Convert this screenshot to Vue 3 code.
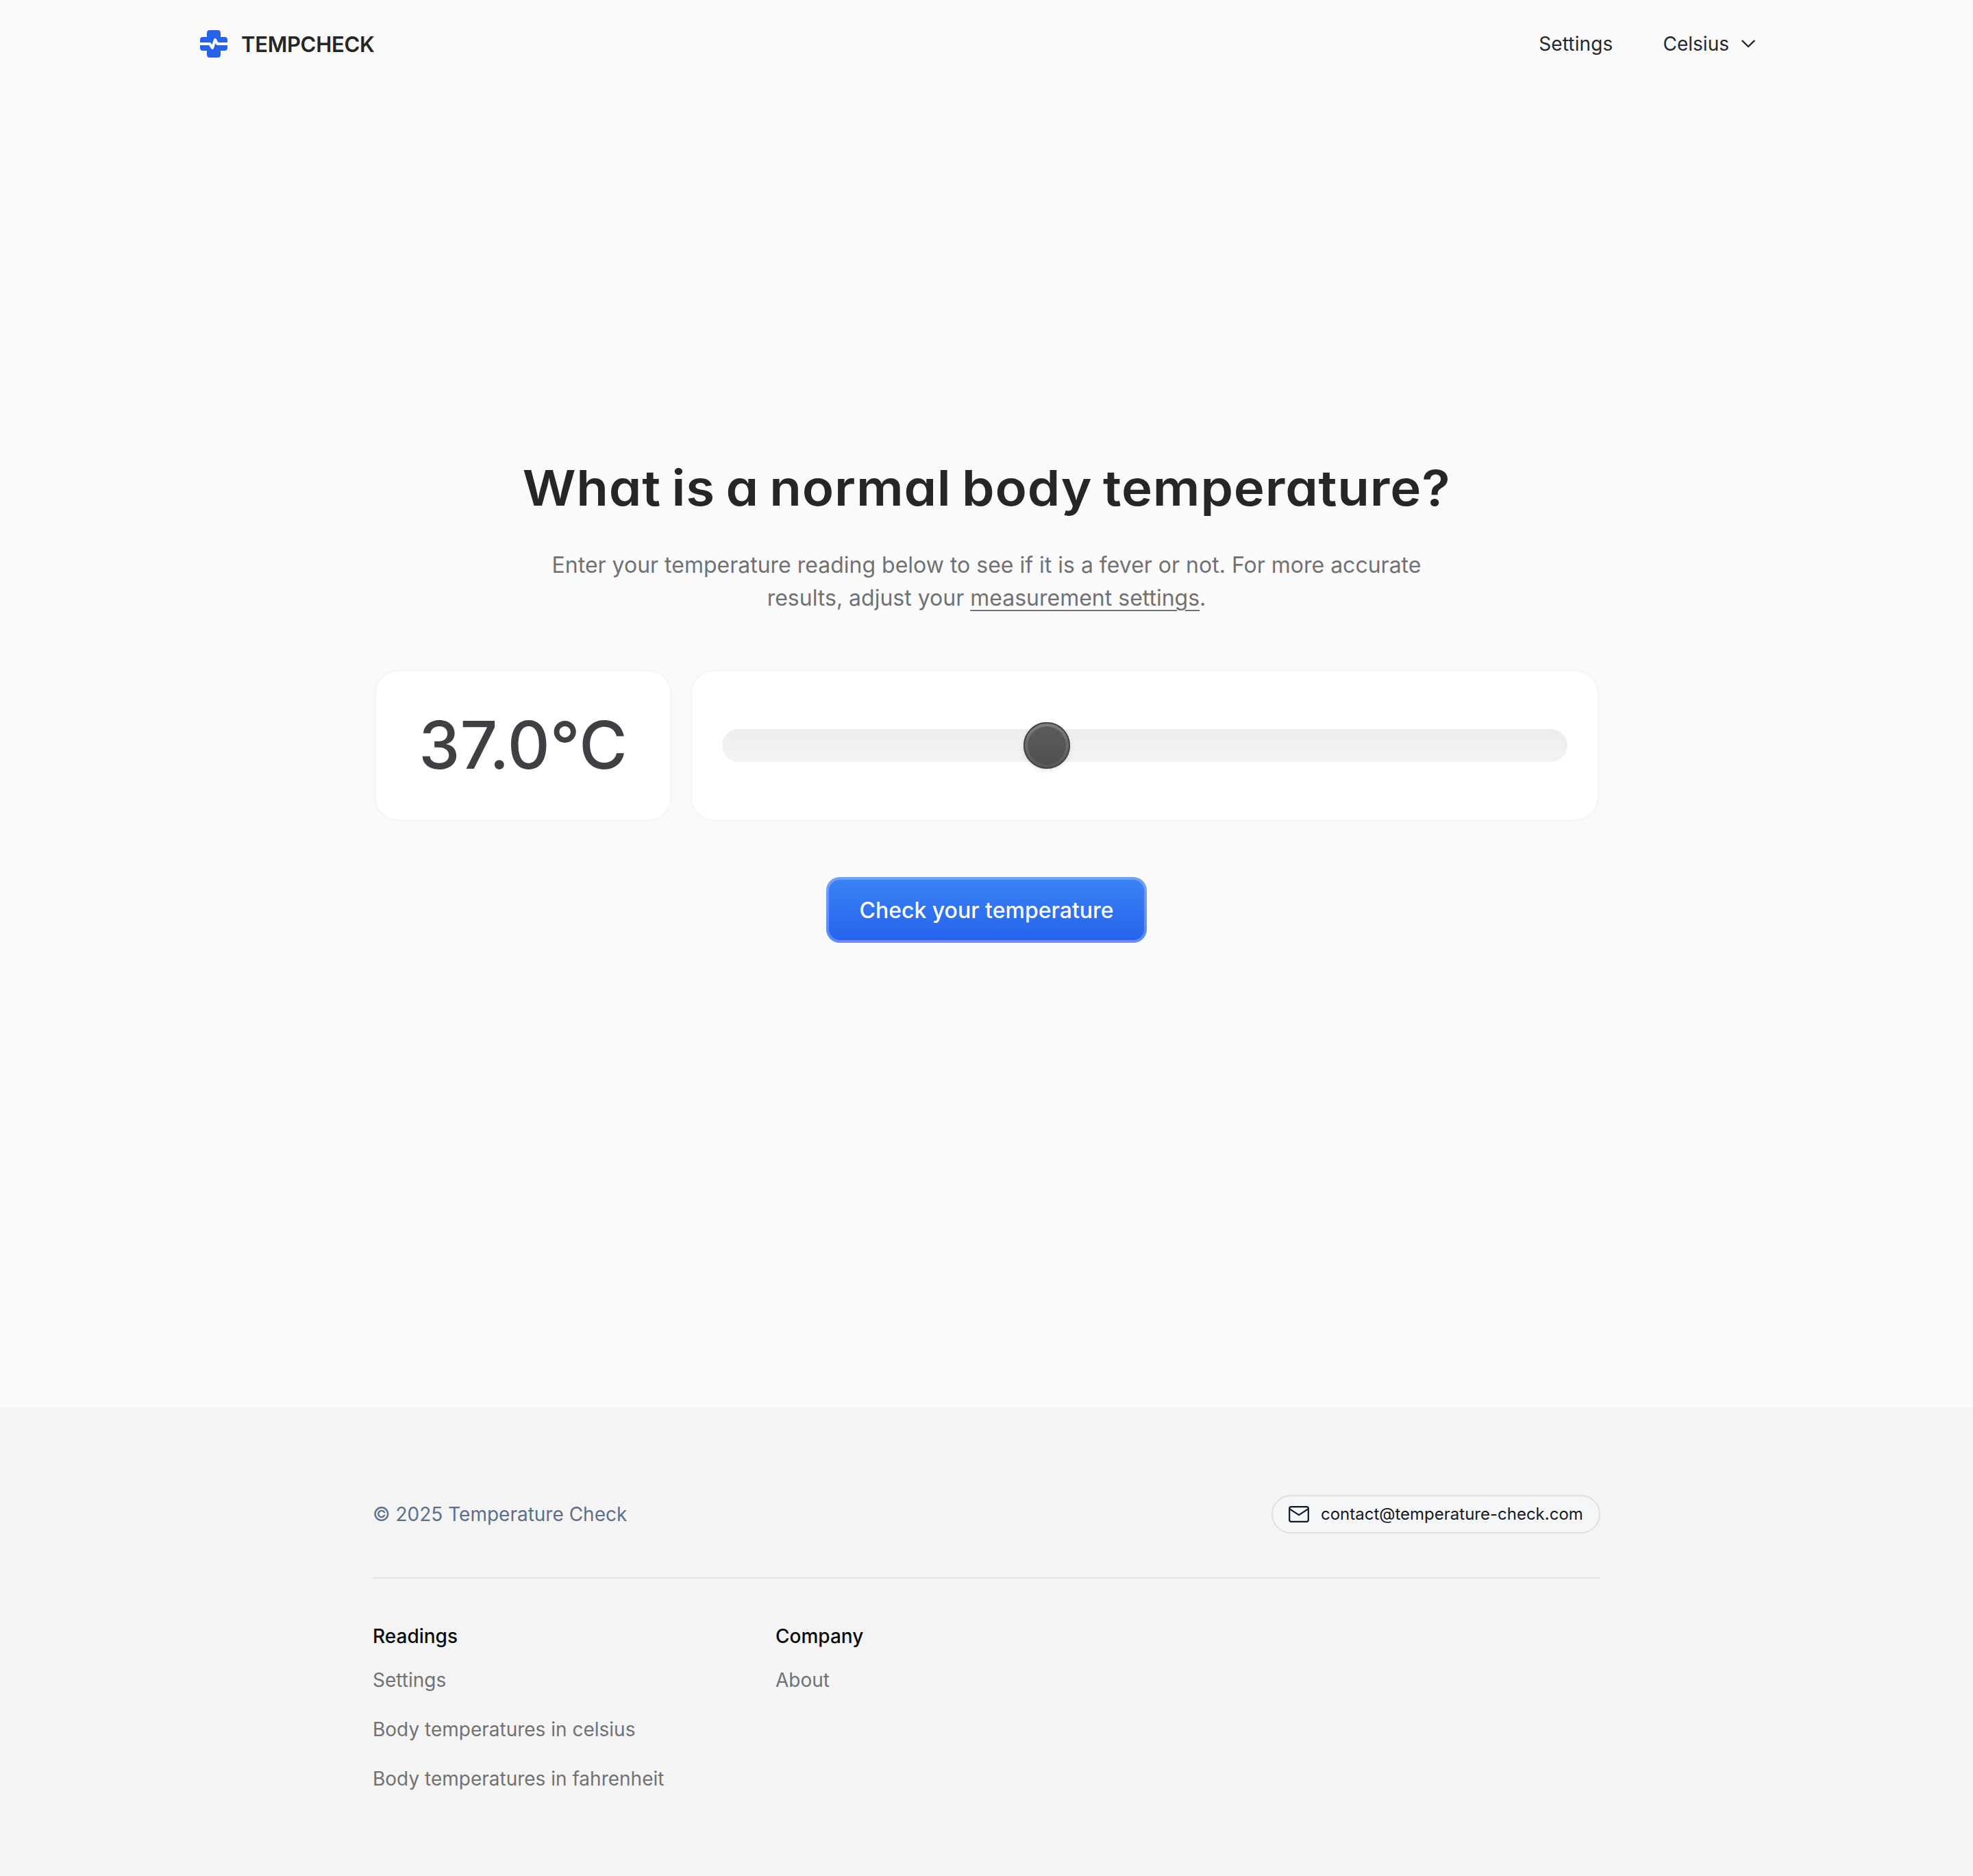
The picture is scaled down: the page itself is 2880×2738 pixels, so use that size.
<script setup>
import { ref, computed } from 'vue'

const temperature = ref(37)
const reading = computed(() => `${temperature.value.toFixed(1)}°C`)

const readings = ['Settings', 'Body temperatures in celsius', 'Body temperatures in fahrenheit']
const company = ['About']
</script>

<template>
  <div class="page">
    <header class="header">
      <a class="brand">
        <svg class="logo" viewBox="0 0 40 40">
          <path
            fill="#2563eb"
            d="M14 0h12a4 4 0 0 1 4 4v6h6a4 4 0 0 1 4 4v12a4 4 0 0 1-4 4h-6v6a4 4 0 0 1-4 4H14a4 4 0 0 1-4-4v-6H4a4 4 0 0 1-4-4V14a4 4 0 0 1 4-4h6V4a4 4 0 0 1 4-4z"
          />
          <path
            fill="none"
            stroke="#fafafa"
            stroke-width="4"
            stroke-linejoin="round"
            d="M-1 20H14.2L18 26L22 14L25.4 20H41"
          />
        </svg>
        <span class="brand-name">TEMPCHECK</span>
      </a>
      <nav class="nav">
        <a class="nav-settings">Settings</a>
        <a class="nav-unit">
          <span>Celsius</span>
          <svg class="chevron" viewBox="0 0 20 12">
            <path
              fill="none"
              stroke="currentColor"
              stroke-width="2.4"
              stroke-linecap="round"
              stroke-linejoin="round"
              d="M1.4 1.7L10 10L18.6 1.7"
            />
          </svg>
        </a>
      </nav>
    </header>

    <main class="main">
      <h1 class="title">What is a normal body temperature?</h1>
      <p class="intro">
        Enter your temperature reading below to see if it is a fever or not. For more accurate<br />
        results, adjust your <a class="link">measurement settings</a>.
      </p>
      <div class="cards">
        <div class="card reading"><span>{{ reading }}</span></div>
        <div class="card slider">
          <div class="track"><div class="thumb"></div></div>
        </div>
      </div>
      <button class="submit">Check your temperature</button>
    </main>

    <footer class="footer">
      <div class="footer-inner">
        <div class="footer-top">
          <span class="copyright">© 2025 Temperature Check</span>
          <a class="contact">
            <svg class="mail" viewBox="0 0 30 24">
              <rect x="1.2" y="1.2" width="27.6" height="21.6" rx="2.6" />
              <path d="M2 4.6L15 13.2L28 4.6" />
            </svg>
            <span>contact@temperature-check.com</span>
          </a>
        </div>
        <div class="columns">
          <section class="column">
            <h2>Readings</h2>
            <ul>
              <li v-for="item in readings" :key="item">{{ item }}</li>
            </ul>
          </section>
          <section class="column">
            <h2>Company</h2>
            <ul>
              <li v-for="item in company" :key="item">{{ item }}</li>
            </ul>
          </section>
        </div>
      </div>
    </footer>
  </div>
</template>

<style>
body {
  margin: 0;
  background: #fafafa;
}
</style>

<style scoped>
.page {
  display: flex;
  flex-direction: column;
  height: 2738px;
  font-family: Inter, sans-serif;
  font-size: 28px;
  line-height: 40px;
  color: #27272a;
  background: #fafafa;
}
.header {
  box-sizing: border-box;
  display: flex;
  align-items: center;
  justify-content: space-between;
  height: 128px;
  padding: 0 318px 0 292px;
}
.brand {
  display: flex;
  align-items: center;
  gap: 20px;
}
.logo {
  width: 40px;
  height: 40px;
}
.brand-name {
  padding-top: 1px;
  font-size: 31px;
  font-weight: 600;
  letter-spacing: -0.3px;
  color: #262626;
}
.nav {
  display: flex;
  align-items: center;
  gap: 73px;
}
.nav-settings {
  letter-spacing: 0.15px;
}
.nav-unit {
  display: flex;
  align-items: center;
  gap: 18px;
}
.chevron {
  width: 20px;
  height: 12px;
}
.main {
  box-sizing: border-box;
  display: flex;
  flex-direction: column;
  align-items: center;
  height: 1926px;
  padding-top: 544px;
}
.title {
  margin: 0;
  font-size: 72px;
  font-weight: 600;
  letter-spacing: 0.75px;
  word-spacing: -4.3px;
  line-height: 80px;
  white-space: nowrap;
  color: #262626;
  font-feature-settings: 'cv11', 'ss03';
  transform: scaleX(1.06);
}
.intro {
  margin: 49px 0 79px;
  font-size: 32px;
  line-height: 48px;
  text-align: center;
  white-space: nowrap;
  color: #717174;
}
.link {
  text-decoration: underline;
  text-decoration-thickness: 2px;
  text-underline-offset: 6px;
}
.cards {
  box-sizing: border-box;
  display: flex;
  gap: 32px;
  width: 1792px;
  height: 224px;
  padding: 4px 4px 4px 5px;
}
.card {
  display: flex;
  align-items: center;
  justify-content: center;
  border-radius: 32px;
  background: #fff;
  box-shadow: 0 0 0 3px rgba(0, 0, 0, 0.012), 0 0 6px rgba(0, 0, 0, 0.02);
}
.reading {
  width: 429px;
  font-size: 96px;
  font-weight: 500;
  color: #3f3f44;
}
.reading span {
  padding: 0 0 2px;
}
.slider {
  flex: 1;
}
.track {
  box-sizing: border-box;
  display: flex;
  align-items: center;
  width: 1234px;
  height: 48px;
  padding-left: 440px;
  border-radius: 24px;
  background: linear-gradient(#ededed, #f3f3f3);
}
.thumb {
  box-sizing: border-box;
  width: 68px;
  height: 68px;
  border: 6px solid transparent;
  border-radius: 50%;
  background:
    linear-gradient(#5c5c5c, #505050) padding-box,
    linear-gradient(#808080, #555) border-box;
  box-shadow: 0 2px 6px rgba(0, 0, 0, 0.12);
  outline: 2px solid #444;
  outline-offset: -2px;
}
.submit {
  width: 468px;
  height: 96px;
  margin: 80px 0 0;
  padding: 2px 0 0;
  border: 0;
  border-radius: 20px;
  font: 500 32px/48px Inter, sans-serif;
  white-space: nowrap;
  color: #fff;
  background: linear-gradient(#3b82f6, #2563eb) 0 4px / 100% 88px no-repeat, linear-gradient(#3b82f6 50%, #4560ee 50%);
  box-shadow: inset 0 0 0 4px rgba(255, 255, 255, 0.25);
}
.footer {
  flex: 1;
  background: #f4f4f4;
}
.footer-inner {
  width: 1792px;
  margin: 0 auto;
  padding-top: 128px;
}
.footer-top {
  display: flex;
  align-items: center;
  justify-content: space-between;
  height: 56px;
  padding-bottom: 64px;
  border-bottom: 2px solid #e5e5e5;
}
.copyright {
  color: #5f6f88;
}
.contact {
  box-sizing: border-box;
  display: flex;
  align-items: center;
  gap: 17px;
  width: 480px;
  height: 56px;
  padding-left: 23px;
  border: 2px solid #dfdfe1;
  border-radius: 28px;
  font-size: 24px;
  color: #18181b;
  background: #f5f6f7;
  white-space: nowrap;
}
.mail {
  width: 30px;
  height: 24px;
  fill: none;
  stroke: #0f172a;
  stroke-width: 2.2;
  stroke-linejoin: round;
}
.columns {
  display: flex;
  padding-top: 64px;
}
.column {
  width: 588px;
}
.column h2 {
  margin: 0 0 24px;
  font-size: 28px;
  font-weight: 500;
  line-height: 40px;
  color: #0a0a0a;
}
.column ul {
  display: flex;
  flex-direction: column;
  gap: 32px;
  margin: 0;
  padding: 0;
  list-style: none;
  color: #717174;
}
</style>
